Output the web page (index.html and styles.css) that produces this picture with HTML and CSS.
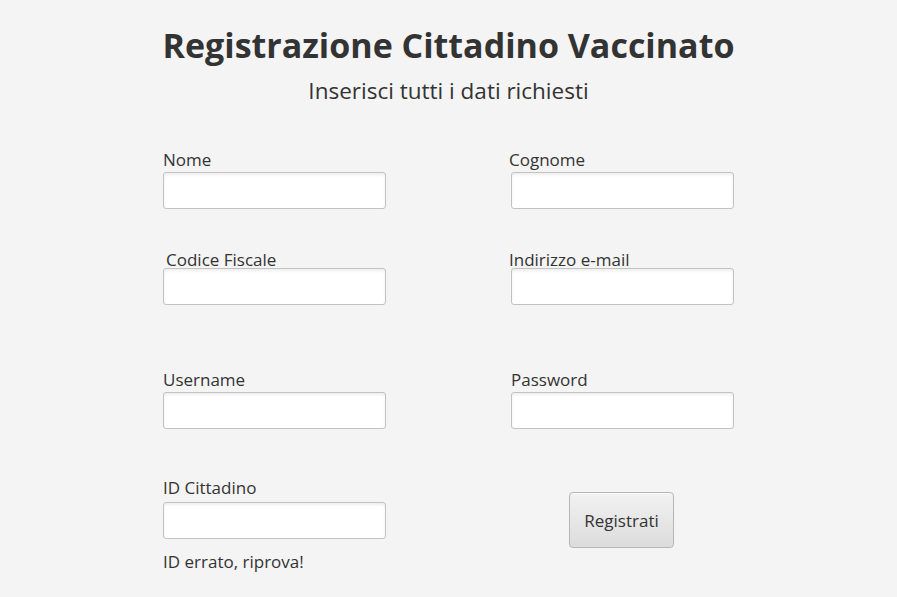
FILE: index.html
```html
<!DOCTYPE html>
<html lang="it">
<head>
<meta charset="utf-8">
<title>Registrazione Cittadino Vaccinato</title>
<link rel="stylesheet" href="styles.css">
</head>
<body>
<main class="page">
  <header class="head">
    <h1 class="title">Registrazione Cittadino Vaccinato</h1>
    <p class="subtitle">Inserisci tutti i dati richiesti</p>
  </header>
  <form class="form">
    <div class="row row-1">
      <div class="field">
        <label class="label">Nome</label>
        <input class="input" type="text">
      </div>
      <div class="field field-right">
        <label class="label label-left">Cognome</label>
        <input class="input" type="text">
      </div>
    </div>
    <div class="row row-2">
      <div class="field">
        <label class="label label-cf tight">Codice Fiscale</label>
        <input class="input" type="text">
      </div>
      <div class="field field-right">
        <label class="label label-left tight">Indirizzo e-mail</label>
        <input class="input" type="text">
      </div>
    </div>
    <div class="row row-3">
      <div class="field">
        <label class="label">Username</label>
        <input class="input" type="text">
      </div>
      <div class="field field-right">
        <label class="label">Password</label>
        <input class="input" type="password">
      </div>
    </div>
    <div class="row row-4">
      <div class="field">
        <label class="label wide">ID Cittadino</label>
        <input class="input" type="text">
        <span class="error">ID errato, riprova!</span>
      </div>
      <div class="field-button">
        <button class="button" type="button">Registrati</button>
      </div>
    </div>
  </form>
</main>
</body>
</html>
```

FILE: styles.css
```css
* { box-sizing: border-box; }

html, body {
  margin: 0;
  padding: 0;
}

body {
  background: #f4f4f4;
  color: #333333;
  font-family: "Open Sans", "Noto Sans", "Liberation Sans", sans-serif;
  width: 897px;
  height: 597px;
  overflow: hidden;
}

.page {
  display: flex;
  flex-direction: column;
}

.head {
  display: flex;
  flex-direction: column;
  align-items: center;
  padding-top: 23px;
}

.title {
  margin: 0;
  font-size: 34px;
  line-height: 44px;
  font-weight: 700;
  color: #333333;
}

.subtitle {
  margin: 9px 0 0;
  font-size: 22.5px;
  line-height: 30px;
  font-weight: 400;
  color: #333333;
}

.form {
  margin: 43px 0 0 163px;
  display: flex;
  flex-direction: column;
}

.row {
  display: grid;
  grid-template-columns: 223px 225px;
  column-gap: 123px;
  align-items: start;
}

.row-2 { margin-top: 40px; }
.row-3 { margin-top: 64px; }
.row-4 { margin-top: 48px; }

.field {
  display: flex;
  flex-direction: column;
  align-items: flex-start;
}

.field-right .input { margin-left: 2px; }

.label {
  font-size: 17px;
  line-height: 20px;
  margin: 1px 0 2px;
  color: #333333;
}

.field-right .label { margin-left: 2px; }
.field-right .label-left { margin-left: 0; }
.label-cf { margin-left: 3px; }
.tight { margin-bottom: -2px; position: relative; z-index: 1; }
.wide { margin-bottom: 4px; }

.input {
  width: 223px;
  height: 37px;
  margin: 0;
  background: #ffffff;
  border: 1px solid #c2c2c2;
  border-radius: 3px;
  box-shadow: inset 0 2px 3px rgba(0, 0, 0, 0.07);
  font: inherit;
  font-size: 17px;
  padding: 0 8px;
  outline: none;
}

.error {
  margin-top: 13px;
  font-size: 17px;
  line-height: 20px;
  color: #333333;
}

.field-button {
  display: flex;
  justify-content: center;
  padding-top: 15px;
}

.button {
  width: 105px;
  height: 56px;
  margin: 0;
  border: 1px solid #b5b5b5;
  border-radius: 4px;
  background: linear-gradient(#f2f2f2, #dcdcdc);
  box-shadow: inset 0 1px 0 rgba(255, 255, 255, 0.8);
  color: #333333;
  font: inherit;
  font-size: 17px;
  padding: 0;
}
```
